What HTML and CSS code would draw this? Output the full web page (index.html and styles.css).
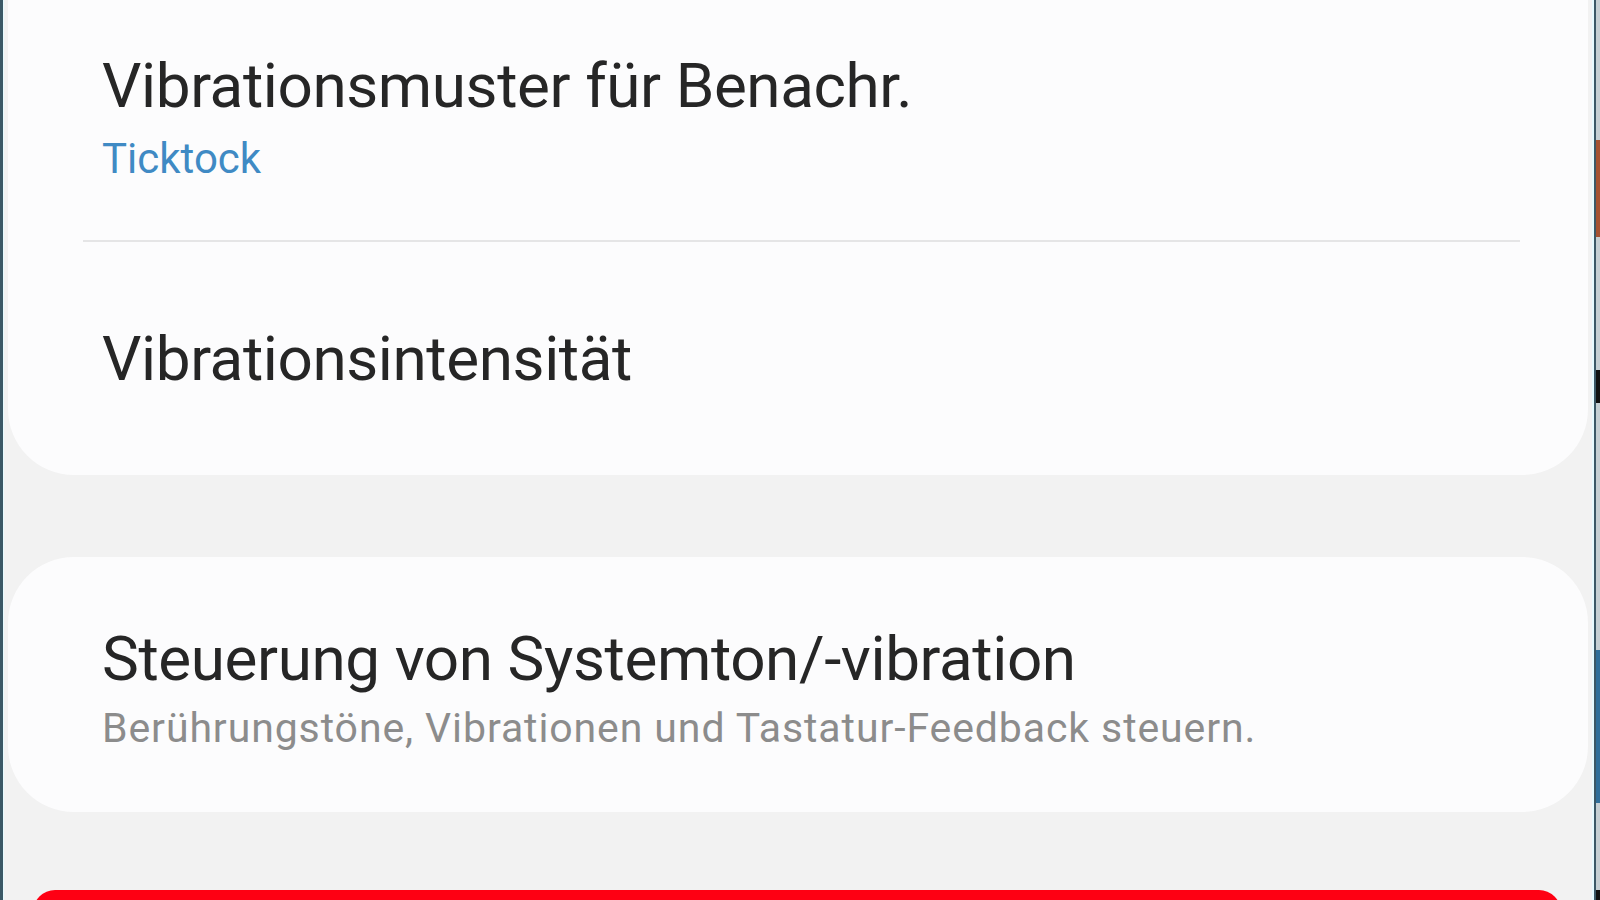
FILE: index.html
```html
<!DOCTYPE html>
<html lang="de">
<head>
<meta charset="utf-8">
<title>Vibration</title>
<link rel="stylesheet" href="styles.css">
</head>
<body>
<div class="frame">
  <div class="edge-left"></div>
  <main class="phone">
    <section class="card card-top">
      <div class="row row-pattern">
        <div class="title">Vibrationsmuster für Benachr.</div>
        <div class="value">Ticktock</div>
      </div>
      <div class="divider"></div>
      <div class="row row-intensity">
        <div class="title">Vibrationsintensität</div>
      </div>
    </section>
    <section class="card card-system">
      <div class="row row-system">
        <div class="title">Steuerung von Systemton/-vibration</div>
        <div class="summary">Berührungstöne, Vibrationen und Tastatur-Feedback steuern.</div>
      </div>
    </section>
    <div class="red-bar"></div>
  </main>
  <div class="edge-right">
    <div class="seg seg-gray"></div>
    <div class="seg seg-orange"></div>
    <div class="seg seg-gray2"></div>
    <div class="seg seg-black"></div>
    <div class="seg seg-gray3"></div>
    <div class="seg seg-blue"></div>
    <div class="seg seg-gray4"></div>
    <div class="seg seg-black2"></div>
  </div>
</div>
</body>
</html>
```

FILE: styles.css
```css
html, body {
  margin: 0;
  padding: 0;
  width: 1600px;
  height: 900px;
  overflow: hidden;
  background: #f2f2f2;
  font-family: Roboto, "Noto Sans", sans-serif;
}

.frame {
  display: flex;
  width: 1600px;
  height: 900px;
}

.edge-left {
  width: 3px;
  background: #3b5866;
  border-right: 1px solid #e6fbff;
}

.phone {
  flex: 1;
  display: flex;
  flex-direction: column;
  background: #f2f2f2;
  padding: 0 4px;
  border-right: 2px solid #e6fbff;
  overflow: hidden;
}

.card {
  background: #fcfcfd;
}

.card-top {
  height: 475px;
  border-radius: 0 0 66px 66px;
  display: flex;
  flex-direction: column;
  flex-shrink: 0;
}

.row {
  padding-left: 94px;
}

.row-pattern {
  padding-top: 46px;
  height: 190px;
  box-sizing: border-box;
}

.title {
  font-size: 62px;
  line-height: 80px;
  letter-spacing: -0.4px;
  color: #262626;
  white-space: nowrap;
}

.value {
  margin-top: 8px;
  font-size: 42px;
  line-height: 50px;
  color: #3f8ac4;
}

.divider {
  height: 2px;
  background: #e5e5e6;
  margin: 50px 68px 0 75px;
}

.row-intensity {
  padding-top: 77px;
}

.card-system {
  margin-top: 82px;
  height: 255px;
  border-radius: 66px;
  flex-shrink: 0;
}

.row-system {
  padding-top: 62px;
}

.summary {
  margin-top: 5px;
  font-size: 41px;
  line-height: 48px;
  letter-spacing: 0.9px;
  color: #8c8c8c;
  white-space: nowrap;
}

.red-bar {
  margin: 78px 27px 0 25px;
  height: 40px;
  background: #fe0013;
  border-radius: 22px 22px 0 0;
  flex-shrink: 0;
}

.edge-right {
  width: 6px;
  border-left: 2px solid #3b5866;
  display: flex;
  flex-direction: column;
  box-sizing: border-box;
}

.seg { flex-shrink: 0; }
.seg-gray { height: 140px; background: #c4cfd3; }
.seg-orange { height: 97px; background: #a55232; }
.seg-gray2 { height: 133px; background: #c4cfd3; }
.seg-black { height: 33px; background: #111; }
.seg-gray3 { height: 247px; background: #c4cfd3; }
.seg-blue { height: 153px; background: #2f6f9a; }
.seg-gray4 { height: 87px; background: #c4cfd3; }
.seg-black2 { height: 10px; background: #111; }
```
